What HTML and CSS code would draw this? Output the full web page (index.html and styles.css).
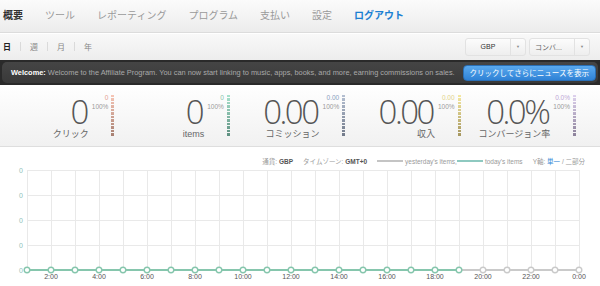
FILE: index.html
```html
<!DOCTYPE html>
<html lang="ja">
<head>
    <meta charset="UTF-8">
    <meta name="viewport" content="width=device-width, initial-scale=1.0">
    <title>Affiliate Dashboard</title>
    <link rel="stylesheet" href="styles.css">
</head>
<body>
    <div class="nav">
        <a href="#" class="active">概要</a>
        <a href="#">ツール</a>
        <a href="#">レポーティング</a>
        <a href="#">プログラム</a>
        <a href="#">支払い</a>
        <a href="#">設定</a>
        <a href="#" class="logout">ログアウト</a>
    </div>

    <div class="subbar">
        <div class="periods">
            <a href="#" class="active">日</a>
            <span class="sep"></span>
            <a href="#">週</a>
            <span class="sep"></span>
            <a href="#">月</a>
            <span class="sep"></span>
            <a href="#">年</a>
        </div>
        <div class="selects">
            <div class="select select-currency">
                <span class="select-value">GBP</span>
                <span class="select-arrow">▼</span>
            </div>
            <div class="select select-metric">
                <span class="select-value">コンバ...</span>
                <span class="select-arrow">▼</span>
            </div>
        </div>
    </div>

    <div class="welcome">
        <div class="welcome-inner">
            <p><b>Welcome:</b> Welcome to the Affiliate Program. You can now start linking to music, apps, books, and more, earning commissions on sales.</p>
            <button type="button">クリックしてさらにニュースを表示</button>
        </div>
    </div>

    <div class="stats">
        <div class="stat stat-clicks">
            <div class="stat-main">
                <div class="num">0</div>
                <div class="label">クリック</div>
            </div>
            <div class="mini">
                <div class="mini-value">0</div>
                <div>100%</div>
            </div>
            <div class="bar"></div>
        </div>
        <div class="stat stat-items">
            <div class="stat-main">
                <div class="num">0</div>
                <div class="label">items</div>
            </div>
            <div class="mini">
                <div class="mini-value">0</div>
                <div>100%</div>
            </div>
            <div class="bar"></div>
        </div>
        <div class="stat stat-commission">
            <div class="stat-main">
                <div class="num">0.00</div>
                <div class="label">コミッション</div>
            </div>
            <div class="mini">
                <div class="mini-value">0.00</div>
                <div>100%</div>
            </div>
            <div class="bar"></div>
        </div>
        <div class="stat stat-income">
            <div class="stat-main">
                <div class="num">0.00</div>
                <div class="label">収入</div>
            </div>
            <div class="mini">
                <div class="mini-value">0.00</div>
                <div>100%</div>
            </div>
            <div class="bar"></div>
        </div>
        <div class="stat stat-conversion">
            <div class="stat-main">
                <div class="num">0.0%</div>
                <div class="label">コンバージョン率</div>
            </div>
            <div class="mini">
                <div class="mini-value">0.0%</div>
                <div>100%</div>
            </div>
            <div class="bar"></div>
        </div>
    </div>

    <div class="chart">
        <div class="legend">
            <span>通貨: <b>GBP</b></span>
            <span>タイムゾーン: <b>GMT+0</b></span>
            <span class="key"><i class="line line-yesterday"></i>yesterday's items,</span>
            <span class="key"><i class="line line-today"></i>today's items</span>
            <span class="axis">Y軸: <a href="#">単一</a> / 二部分</span>
        </div>
        <svg class="plot" width="600" height="121" viewBox="0 0 600 121">
            <g id="grid" stroke="#e9e9e9" stroke-width="1"></g>
            <g id="ylabels" class="ylabel"></g>
            <polyline points="27,104 459,104" stroke="#86c6ad" stroke-width="2" fill="none"/>
            <polyline points="459,104 579,104" stroke="#cacaca" stroke-width="2" fill="none"/>
            <g id="dots"></g>
            <g id="xlabels" class="xlabel"></g>
        </svg>
    </div>

    <script>
        var ns = 'http://www.w3.org/2000/svg';
        var grid = document.getElementById('grid');
        var dots = document.getElementById('dots');
        var ylabels = document.getElementById('ylabels');
        var xlabels = document.getElementById('xlabels');

        function el(name, attrs, parent) {
            var node = document.createElementNS(ns, name);
            for (var k in attrs) node.setAttribute(k, attrs[k]);
            parent.appendChild(node);
            return node;
        }

        for (var r = 0; r < 5; r++) {
            var y = 4 + r * 25;
            el('line', {x1: 27, y1: y + 0.5, x2: 579, y2: y + 0.5}, grid);
            var t = el('text', {x: 23, y: y + 2.5, 'text-anchor': 'end'}, ylabels);
            t.textContent = '0';
        }

        for (var i = 0; i < 24; i++) {
            var x = 27 + i * 24;
            el('line', {x1: x + 0.5, y1: 4, x2: x + 0.5, y2: 104}, grid);
            var today = i <= 18;
            el('circle', {cx: x, cy: 104, r: 2.8, fill: '#fff',
                stroke: today ? '#86c6ad' : '#cacaca', 'stroke-width': 1.4}, dots);
            if (i % 2 === 1) {
                var lab = el('text', {x: x, y: 113, 'text-anchor': 'middle'}, xlabels);
                lab.textContent = ((i + 1) % 24) + ':00';
            }
        }
    </script>
</body>
</html>
```

FILE: styles.css
```css
* {
    margin: 0;
    padding: 0;
    box-sizing: border-box;
}

body {
    width: 600px;
    height: 286px;
    overflow: hidden;
    background: #fff;
    font-family: 'Liberation Sans', 'Noto Sans CJK JP', sans-serif;
    color: #555;
}

a {
    text-decoration: none;
    color: inherit;
}

/* top navigation */
.nav {
    height: 33px;
    display: flex;
    align-items: center;
    gap: 22px;
    padding: 0 0 4px 3px;
    background: linear-gradient(#fbfbfb, #ececec);
    border-bottom: 1px solid #dcdcdc;
    font-size: 10px;
    color: #9a9a9a;
}

.nav .active {
    color: #333;
    font-weight: bold;
}

.nav .logout {
    color: #1b80d2;
    font-weight: bold;
}

/* period switch + selects */
.subbar {
    height: 27px;
    display: flex;
    align-items: center;
    justify-content: space-between;
    padding: 0 10px 0 3px;
    background: linear-gradient(#f9f9f9, #ededed);
    box-shadow: inset 0 1px 0 #fff;
}

.periods {
    display: flex;
    align-items: center;
    font-size: 8px;
    color: #888;
}

.periods .active {
    color: #222;
    font-weight: bold;
}

.periods .sep {
    width: 1px;
    height: 9px;
    background: #dadada;
    margin: 0 9px;
}

.selects {
    display: flex;
    gap: 3px;
}

.select {
    height: 18px;
    display: flex;
    border: 1px solid #e2e2e2;
    border-radius: 3px;
    background: linear-gradient(#fcfcfc, #eeeeee);
    font-size: 7px;
    color: #333;
}

.select-value {
    display: flex;
    align-items: center;
}

.select-currency .select-value {
    width: 44px;
    justify-content: center;
}

.select-metric .select-value {
    width: 44px;
    padding-left: 5px;
    color: #666;
}

.select-arrow {
    width: 15px;
    display: flex;
    align-items: center;
    justify-content: center;
    border-left: 1px solid #e2e2e2;
    font-size: 4px;
    color: #888;
}

/* welcome strip */
.welcome {
    height: 25px;
    padding: 2px;
    background: #2a2a2a;
}

.welcome-inner {
    height: 21px;
    display: flex;
    align-items: center;
    justify-content: space-between;
    padding: 0 2px 0 9px;
    border-radius: 5px;
    background: linear-gradient(#454545, #393939);
}

.welcome p {
    font-size: 7.4px;
    color: #a9a9a9;
    white-space: nowrap;
}

.welcome b {
    color: #fff;
}

.welcome button {
    height: 16px;
    padding: 0 6px;
    border: 1px solid #2a6fb5;
    border-radius: 4px;
    background: linear-gradient(#5aa9ee, #2f82d6);
    color: #fff;
    font-family: 'Noto Sans CJK JP', sans-serif;
    font-size: 7.5px;
}

/* stat tiles */
.stats {
    height: 60px;
    margin-top: 2px;
    display: flex;
    background: linear-gradient(#fefefe, #f1f1f1);
    border-bottom: 1px solid #dedede;
}

.stat {
    width: 115.4px;
    display: flex;
    justify-content: flex-end;
    gap: 3px;
    padding: 8px 1px 0 0;
}

.stat-main {
    display: flex;
    flex-direction: column;
    align-items: flex-end;
}

.num {
    font-family: 'Open Sans', sans-serif;
    font-weight: 300;
    font-size: 33px;
    line-height: 34px;
    letter-spacing: -2.5px;
    padding-right: 2px;
    color: #555;
}

.label {
    font-size: 9px;
    line-height: 11px;
    color: #666;
}

.mini {
    margin-top: -2px;
    font-size: 6.5px;
    line-height: 9px;
    text-align: right;
    color: #9a9a9a;
}

.bar {
    width: 3px;
    height: 42px;
    -webkit-mask-image: repeating-linear-gradient(#000 0 2.5px, transparent 2.5px 3.5px);
    mask-image: repeating-linear-gradient(#000 0 2.5px, transparent 2.5px 3.5px);
}

.stat-clicks .mini-value { color: #e4a292; }
.stat-clicks .bar { background: linear-gradient(#f7c6b6, #a57e70); }

.stat-items .mini-value { color: #84c4ab; }
.stat-items .bar { background: linear-gradient(#a8e2cd, #5c8d7e); }

.stat-commission .mini-value { color: #8a9fbf; }
.stat-commission .bar { background: linear-gradient(#b5c0d2, #707888); }

.stat-income .mini-value { color: #e3d488; }
.stat-income .bar { background: linear-gradient(#f5e9a2, #a3945d); }

.stat-conversion .mini-value { color: #bda7d6; }
.stat-conversion .bar { background: linear-gradient(#ded2ee, #8a7f98); }

/* chart */
.chart {
    padding-top: 9px;
}

.legend {
    height: 10px;
    display: flex;
    align-items: center;
    justify-content: flex-end;
    gap: 10px;
    padding-right: 15px;
    font-size: 6.5px;
    color: #9a9a9a;
}

.legend b {
    color: #555;
}

.legend .key {
    display: flex;
    align-items: center;
}

.legend .line {
    width: 26px;
    height: 2px;
    margin-right: 2px;
}

.legend .line-yesterday { background: #c4c4c4; }
.legend .line-today { background: #8ec9c0; margin-left: -10px; }

.legend .axis a {
    color: #2f86d6;
}

.plot {
    display: block;
}

.ylabel {
    font-family: 'Liberation Sans', sans-serif;
    font-size: 7px;
    fill: #8fc3bb;
}

.xlabel {
    font-family: 'Liberation Sans', sans-serif;
    font-size: 7px;
    fill: #555;
}
```
